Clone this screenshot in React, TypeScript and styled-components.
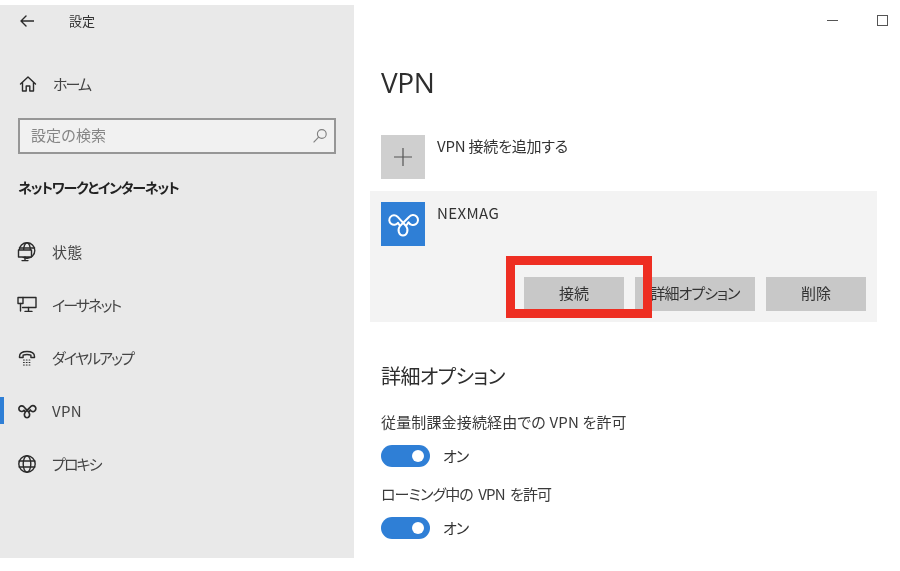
import React from "react";
import styled, { createGlobalStyle } from "styled-components";

const Global = createGlobalStyle`
  html, body { margin: 0; padding: 0; background: #fff; }
  body { font-family: "Noto Sans CJK JP", "Noto Sans", sans-serif; color: #2b2b2b; font-feature-settings: "palt"; }
  #root { width: 900px; height: 571px; overflow: hidden; }
`;

const Page = styled.div`
  width: 900px; height: 571px; display: flex; background: #fff; align-items: flex-start;
  filter: blur(0.45px);
`;

const Sidebar = styled.aside`
  width: 354px; height: 553px; margin-top: 5px; background: #e9e9e9; flex: none;
  display: flex; flex-direction: column;
`;
const TitleBar = styled.div`
  height: 32px; display: flex; align-items: center; padding-left: 20px; gap: 35px;
`;
const TitleText = styled.span`font-size: 13px; line-height: 1; color: #333; font-feature-settings: normal; padding-bottom: 2px;`;

const HomeRow = styled.div`
  height: 40px; margin-top: 27px; display: flex; align-items: center; padding-left: 19px; gap: 16px;
`;
const NavLabel = styled.span<{ $kana?: boolean }>`
  font-size: 15px; line-height: 1; color: #444; padding-bottom: 1px;
  letter-spacing: ${(p) => (p.$kana ? "-1.9px" : "0.3px")};
`;

const SearchBox = styled.div`
  margin: 14px 0 0 18px; width: 318px; height: 36px; box-sizing: border-box;
  border: 2px solid #969696; background: #f1f1f1;
  display: flex; align-items: center; justify-content: space-between; padding: 0 6px 0 11px;
`;
const SearchText = styled.span`font-size: 15px; color: #858585; line-height: 1; font-feature-settings: normal; padding-bottom: 3px;`;

const SectionHeading = styled.h2`
  margin: 24px 0 0 18px; font-size: 14px; line-height: 18px; font-weight: 700; color: #222; letter-spacing: -1.2px;
`;

const NavList = styled.nav`margin-top: 29px; display: flex; flex-direction: column;`;
const NavItem = styled.div<{ $active?: boolean }>`
  position: relative; height: 53px; display: flex; align-items: center; padding-left: 17px; gap: 15px;
  ${(p) => p.$active && `&::before { content: ""; position: absolute; left: 0; top: 13px; width: 4px; height: 27px; background: #2f7fd6; }`}
`;
const IconSlot = styled.span`
  width: 20px; height: 20px; display: flex; align-items: center; justify-content: center; flex: none;
  svg { flex: none; }
`;

const Main = styled.main`
  flex: 1; height: 571px; position: relative; display: flex; flex-direction: column; padding-left: 16px;
`;
const WindowControls = styled.div`
  position: absolute; top: 15px; right: 12px; display: flex; align-items: center; gap: 39px;
`;
const MinGlyph = styled.span`width: 11px; height: 1px; background: #555;`;
const MaxGlyph = styled.span`width: 11px; height: 11px; box-sizing: border-box; border: 1.5px solid #555;`;

const PageTitle = styled.h1`
  margin: 63px 0 0 11px; font-size: 28px; line-height: 38px; font-weight: 400; color: #2e2e2e;
  font-family: "Open Sans", "Noto Sans", sans-serif; letter-spacing: -0.4px;
`;

const AddRow = styled.div`margin: 34px 0 0 11px; display: flex; gap: 12px; height: 44px;`;
const Tile = styled.div<{ $blue?: boolean }>`
  width: 44px; height: 44px; flex: none; display: flex; align-items: center; justify-content: center;
  background: ${(p) => (p.$blue ? "#2f7fd6" : "#cfcfcf")};
`;
const RowText = styled.span<{ $wide?: boolean }>`
  font-size: 15px; line-height: 22px; color: #333;
  letter-spacing: ${(p) => (p.$wide ? "0.4px" : "-0.2px")};
`;

const Card = styled.section`
  position: relative; margin-top: 12px; width: 507px; height: 131px; background: #f3f3f3; box-sizing: border-box;
  padding: 11px; display: flex; flex-direction: column;
`;
const CardTop = styled.div`display: flex; gap: 12px; height: 44px;`;
const CardButtons = styled.div`
  margin-top: 31px; display: flex; justify-content: flex-end; gap: 11px;
`;
const ActionButton = styled.button<{ $w: number; $tight?: boolean }>`
  width: ${(p) => p.$w}px; height: 34px; border: 0; padding: 0 0 3px; background: #c8c8c8; color: #333;
  font-family: inherit; font-size: 15px; font-feature-settings: "palt";
  letter-spacing: ${(p) => (p.$tight ? "-1px" : "0")};
`;
const Highlight = styled.div`
  position: absolute; left: 136px; top: 65px; width: 146px; height: 62px; box-sizing: border-box;
  border: 9px solid #ee2e22;
`;

const OptionsHeading = styled.h2`
  margin: 39px 0 0 11px; font-size: 20px; line-height: 30px; font-weight: 400; color: #2e2e2e; letter-spacing: -0.6px;
`;
const OptionLabel = styled.div<{ $first?: boolean }>`
  margin: ${(p) => (p.$first ? "20px" : "16px")} 0 0 11px; font-size: 15px; line-height: 22px; color: #3a3a3a;
  letter-spacing: ${(p) => (p.$first ? "0.15px" : "-0.9px")};
  word-spacing: ${(p) => (p.$first ? "0" : "3px")};
`;
const ToggleRow = styled.div`margin: 12px 0 0 11px; display: flex; align-items: center; gap: 13px; height: 22px;`;
const Toggle = styled.span`
  position: relative; width: 49px; height: 22px; border-radius: 11px; background: #2f7fd6; display: block;
  &::after { content: ""; position: absolute; right: 6px; top: 5px; width: 12px; height: 12px; border-radius: 50%; background: #fff; }
`;
const ToggleText = styled.span`font-size: 15px; line-height: 1; color: #333; letter-spacing: -1px; padding-bottom: 2px;`;

const s = { fill: "none", stroke: "#2a2a2a", strokeWidth: 1.4, strokeLinecap: "round" as const, strokeLinejoin: "round" as const };

const Back = () => (
  <svg width="14" height="12" viewBox="0 0 14 12" {...s}><path d="M1 6h13M6 1 1 6l5 5" /></svg>
);
const Home = () => (
  <svg width="18" height="18" viewBox="0 0 18 18" {...s}><path d="M1.5 9 9 2l7.5 7M3.5 7.5V16h3.7v-5h3.6v5h3.7V7.5" /></svg>
);
const SearchIcon = () => (
  <svg width="16" height="16" viewBox="0 0 16 16" fill="none" stroke="#7f7f7f" strokeWidth="1.1"><circle cx="9.8" cy="6" r="4.4" /><path d="M6.6 9.2 1.6 14.4" /></svg>
);
const StatusIcon = () => (
  <svg width="20" height="20" viewBox="0 0 20 20" {...s}>
    <circle cx="10" cy="8.5" r="7.8" />
    <ellipse cx="10" cy="8.5" rx="3.4" ry="7.8" />
    <path d="M2.4 6h15.2" />
    <rect x="1.5" y="8" width="13" height="7" fill="#e9e9e9" />
    <path d="M8 15v3M5 18.6h6" />
  </svg>
);
const EthernetIcon = () => (
  <svg width="20" height="17" viewBox="0 0 20 17" {...s}>
    <path d="M6 1.5H19V11.5H5.5" /><path d="M11.5 11.5v3.5M8 15.4h7" />
    <rect x="1" y="1.5" width="5" height="6" /><path d="M3.5 7.5V15" />
  </svg>
);
const DialIcon = () => (
  <svg width="18" height="16" viewBox="0 0 18 16" {...s}>
    <path d="M1.5 6.5C1.5 3 5 1.5 9 1.5s7.5 1.5 7.5 5v1h-3.6V5.2c-2-.7-5.8-.7-7.8 0v2.3H1.5z" />
    <path strokeDasharray="0.8 2" strokeWidth="1.1" d="M5.5 10h7M5.5 12.500h7M5.500 15h7" />
  </svg>
);
const VpnGlyph = ({ c = "#2a2a2a", w = 2.8, size = 26 }: { c?: string; w?: number; size?: number }) => (
  <svg width={size} height={size} viewBox="0 0 44 44" fill="none" stroke={c} strokeWidth={w} strokeLinecap="round" strokeLinejoin="round">
    <path d="M19 24L17 20.8A4.8 4.8 0 1 1 16.5 14.7L25 24C28 28 26 33.5 22 33.5C18 33.5 16 28 19 24L28 15A5 5 0 1 1 27.5 20.2L25 24" />
  </svg>
);
const GlobeIcon = () => (
  <svg width="20" height="20" viewBox="0 0 20 20" {...s}>
    <circle cx="10" cy="10" r="8.2" /><ellipse cx="10" cy="10" rx="3.8" ry="8.2" /><path d="M2.2 7h15.6M2.2 13h15.6" />
  </svg>
);
const Plus = () => (
  <svg width="18" height="18" viewBox="0 0 18 18" stroke="#555" strokeWidth="1.2"><path d="M9 0v18M0 9h18" /></svg>
);

export default function App() {
  return (
    <>
      <Global />
      <Page>
        <Sidebar>
          <TitleBar><Back /><TitleText>設定</TitleText></TitleBar>
          <HomeRow><Home /><NavLabel $kana>ホーム</NavLabel></HomeRow>
          <SearchBox><SearchText>設定の検索</SearchText><SearchIcon /></SearchBox>
          <SectionHeading>ネットワークとインターネット</SectionHeading>
          <NavList>
            <NavItem><IconSlot><StatusIcon /></IconSlot><NavLabel>状態</NavLabel></NavItem>
            <NavItem><IconSlot><EthernetIcon /></IconSlot><NavLabel $kana>イーサネット</NavLabel></NavItem>
            <NavItem><IconSlot><DialIcon /></IconSlot><NavLabel $kana>ダイヤルアップ</NavLabel></NavItem>
            <NavItem $active><IconSlot><VpnGlyph /></IconSlot><NavLabel>VPN</NavLabel></NavItem>
            <NavItem><IconSlot><GlobeIcon /></IconSlot><NavLabel $kana>プロキシ</NavLabel></NavItem>
          </NavList>
        </Sidebar>
        <Main>
          <WindowControls><MinGlyph /><MaxGlyph /></WindowControls>
          <PageTitle>VPN</PageTitle>
          <AddRow><Tile><Plus /></Tile><RowText>VPN 接続を追加する</RowText></AddRow>
          <Card>
            <CardTop>
              <Tile $blue><VpnGlyph c="#fff" w={2} size={44} /></Tile>
              <RowText $wide>NEXMAG</RowText>
            </CardTop>
            <CardButtons>
              <ActionButton $w={100}>接続</ActionButton>
              <ActionButton $w={120} $tight>詳細オプション</ActionButton>
              <ActionButton $w={100}>削除</ActionButton>
            </CardButtons>
            <Highlight />
          </Card>
          <OptionsHeading>詳細オプション</OptionsHeading>
          <OptionLabel $first>従量制課金接続経由での VPN を許可</OptionLabel>
          <ToggleRow><Toggle /><ToggleText>オン</ToggleText></ToggleRow>
          <OptionLabel>ローミング中の VPN を許可</OptionLabel>
          <ToggleRow><Toggle /><ToggleText>オン</ToggleText></ToggleRow>
        </Main>
      </Page>
    </>
  );
}
